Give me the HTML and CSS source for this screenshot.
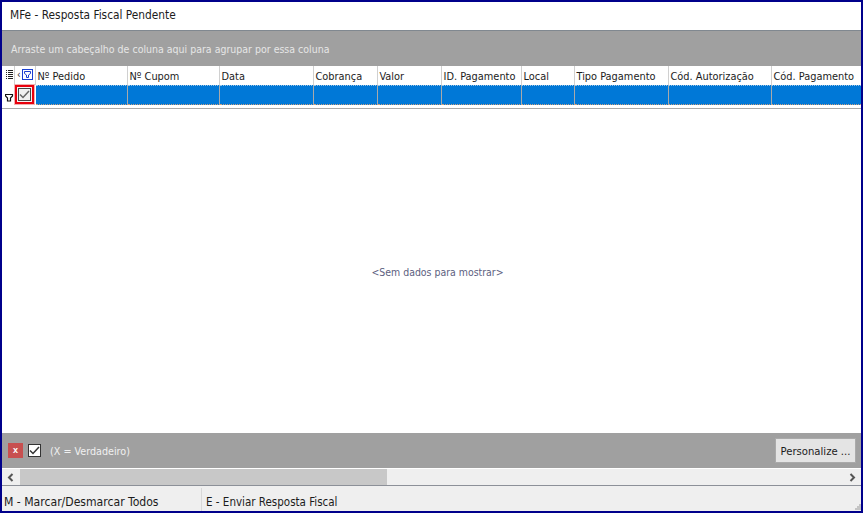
FILE: index.html
```html
<!DOCTYPE html>
<html lang="pt">
<head>
<meta charset="utf-8">
<title>MFe - Resposta Fiscal Pendente</title>
<link rel="stylesheet" href="styles.css">
</head>
<body>
<div class="window">
  <header class="title">MFe - Resposta Fiscal Pendente</header>
  <div class="group-panel">Arraste um cabeçalho de coluna aqui para agrupar por essa coluna</div>
  <div class="grid-row head">
    <div class="cell ind">
      <svg width="8" height="10" viewBox="0 0 8 10"><path d="M0 .5h1M0 2.500h1M0 4.500h1M0 6.500h1M0 8.500h1M2 .5h5M2 2.500h5M2 4.500h5M2 6.500h5M2 8.500h5" stroke="#222" stroke-width="1" fill="none"/></svg>
    </div>
    <div class="cell chk-head">
      <span class="clip">‹</span>
      <svg class="filter-box" width="11" height="11" viewBox="0 0 11 11"><rect x=".5" y=".5" width="10" height="10" fill="#fff" stroke="#1a3fd0"/><path d="M2.500 2.500h6v2L6.500 6v2.500h-2V6L2.500 4.500z" fill="none" stroke="#1a3fd0"/></svg>
    </div>
    <div class="cell">Nº Pedido</div>
    <div class="cell">Nº Cupom</div>
    <div class="cell">Data</div>
    <div class="cell">Cobrança</div>
    <div class="cell">Valor</div>
    <div class="cell">ID. Pagamento</div>
    <div class="cell">Local</div>
    <div class="cell">Tipo Pagamento</div>
    <div class="cell">Cód. Autorização</div>
    <div class="cell last">Cód. Pagamento</div>
  </div>
  <div class="grid-row filter">
    <div class="cell ind">
      <svg width="9" height="9" viewBox="0 0 9 9"><path d="M.5 1.500h7v1.500L5.500 5v3h-3V5L.5 3z" fill="#fff" stroke="#111" stroke-width="1.200"/></svg>
    </div>
    <div class="cell chk-cell">
      <span class="mark">
        <span class="checkbox">
          <svg width="11" height="9" viewBox="0 0 11 9"><path d="M1 4.500l3 3 6-6.500" fill="none" stroke="#666" stroke-width="1.500"/></svg>
        </span>
      </span>
    </div>
    <div class="cell"></div><div class="cell"></div><div class="cell"></div><div class="cell"></div><div class="cell"></div>
    <div class="cell"></div><div class="cell"></div><div class="cell"></div><div class="cell"></div><div class="cell last"></div>
  </div>
  <div class="empty">&lt;Sem dados para mostrar&gt;</div>
  <div class="filter-bar">
    <span class="close">x</span>
    <span class="checkbox small">
      <svg width="11" height="9" viewBox="0 0 11 9"><path d="M1 4.500l3 3 6-6.500" fill="none" stroke="#333" stroke-width="1.500"/></svg>
    </span>
    <span class="filter-text">(X = Verdadeiro)</span>
    <button class="customize" type="button">Personalize ...</button>
  </div>
  <div class="scrollbar">
    <svg class="arrow" width="7" height="9" viewBox="0 0 7 9"><path d="M5.500 1L2 4.500 5.500 8" fill="none" stroke="#555" stroke-width="2"/></svg>
    <div class="track"><div class="thumb"></div></div>
    <svg class="arrow" width="7" height="9" viewBox="0 0 7 9"><path d="M1.500 1L5 4.500 1.500 8" fill="none" stroke="#555" stroke-width="2"/></svg>
  </div>
  <footer class="status">
    <div class="status-item first">M - Marcar/Desmarcar Todos</div>
    <div class="status-item second">E - Enviar Resposta Fiscal</div>
    <svg class="grip" width="6" height="6" viewBox="0 0 6 6"><path d="M4 0h2v2H4zM2 2h2v2H2zM4 2h2v2H4zM0 4h2v2H0zM2 4h2v2H2zM4 4h2v2H4z" fill="#c4c4c4" fill-rule="evenodd"/></svg>
  </footer>
</div>
</body>
</html>
```
FILE: styles.css
```css
* { box-sizing: border-box; }
html, body { margin: 0; padding: 0; }
body { width: 863px; height: 513px; overflow: hidden; background: #fff; }
.window {
  width: 863px; height: 513px;
  border: 2px solid #00008b;
  display: flex; flex-direction: column;
  font-family: "DejaVu Sans", "Noto Sans", sans-serif;
  font-stretch: condensed;
  font-size: 10.7px; color: #1c1c1c;
  background: #fff;
}
.title { height: 28px; flex: none; padding: 6px 0 0 8px; font-size: 11.8px; line-height: 15px; }
.group-panel {
  height: 36px; flex: none;
  background: #a0a0a0; border-top: 1px solid #808890;
  color: #e6e6e6; padding: 11px 0 0 9px; line-height: 14px; font-size: 10.5px;
}
.grid-row {
  display: grid; flex: none;
  grid-template-columns: 13px 21px 92px 92px 94px 64px 64px 80px 53px 94px 103px 1fr;
}
.head { height: 19px; background: #fff; }
.head .cell { border-right: 1px solid #d0d0d0; padding: 4px 0 0 1.500px; line-height: 14px; font-size: 10.9px; white-space: nowrap; overflow: hidden; }
.head .cell.last { border-right: 0; }
.head .ind { padding: 4px 0 0 4px; }
.head .chk-head { display: flex; padding: 0 0 0 2px; align-items: flex-start; }
.clip { font-size: 10px; line-height: 18px; width: 5px; color: #222; overflow: hidden; }
.filter-box { margin-top: 3px; flex: none; }
.filter {
  height: 24px;
  border-bottom: 1px solid #a8a8a8;
  padding-bottom: 5px;
}
.filter .cell {
  background: #0078d7;
  border-right: 1px solid #a9a9a9;
  border-top: 1px dotted #9cc4e4;
  border-bottom: 1px dotted #c8a080;
}
.filter .cell.last { border-right: 0; }
.filter .ind { background: #fff; border-top: 0; border-bottom: 0; border-right: 1px solid #d0d0d0; padding: 7px 0 0 3px; }
.filter .chk-cell { background: #fff; border: 0; position: relative; }
.mark {
  position: absolute; left: 0; top: 0; width: 19px; height: 19px;
  border: 2px solid #e8000d; outline: 1px solid #f0b0b0;
  display: flex; align-items: center; justify-content: center;
  background: #f4f4f4;
}
.checkbox {
  width: 13px; height: 13px; border: 1px solid #333; background: #fff;
  display: flex; align-items: center; justify-content: center; flex: none;
}
.mark .checkbox { background: #f0f0f0; border-color: #444; }
.empty {
  flex: 1; min-height: 0; display: flex; align-items: center; justify-content: center;
  color: #5c6080; padding: 2px 0 0 12px; font-size: 10.45px;
}
.filter-bar {
  height: 35px; flex: none; background: #a0a0a0;
  display: flex; align-items: center; padding: 0 6px;
}
.close {
  width: 15px; height: 15px; background: #c85050; color: #fff;
  font: bold 9px/14px "Liberation Sans", sans-serif; text-align: center; margin-right: 5px;
}
.filter-text { color: #f0f0f0; margin-left: 9px; padding-top: 2px; }
.customize {
  margin-left: auto; margin-right: -1px;
  width: 81px; height: 25px; padding: 2px 0 0;
  background: #e4e4e4; border: 1px solid #aaa;
  font: inherit; font-size: 11.2px; color: #1c1c1c;
}
.scrollbar {
  height: 17px; flex: none; background: #efefef;
  display: flex; align-items: center; border-top: 1px solid #fff;
}
.arrow { flex: none; margin: 0 5px; }
.track { flex: 1; height: 16px; margin-left: 1px; }
.thumb { width: 367px; height: 100%; background: #c8c8c8; }
.status {
  height: 26px; flex: none; display: flex; background: #efefef;
  border-top: 1px solid #8c9098;
}
.status-item { padding: 6px 0 0 2px; line-height: 20px; }
.status-item.first { width: 200px; border-right: 1px solid #d8d8d8; margin-top: 2px; padding-top: 4px; font-size: 12.1px; }
.second { padding-left: 4px; font-size: 11.5px; }
.grip { margin: auto 0 1px auto; }
```
